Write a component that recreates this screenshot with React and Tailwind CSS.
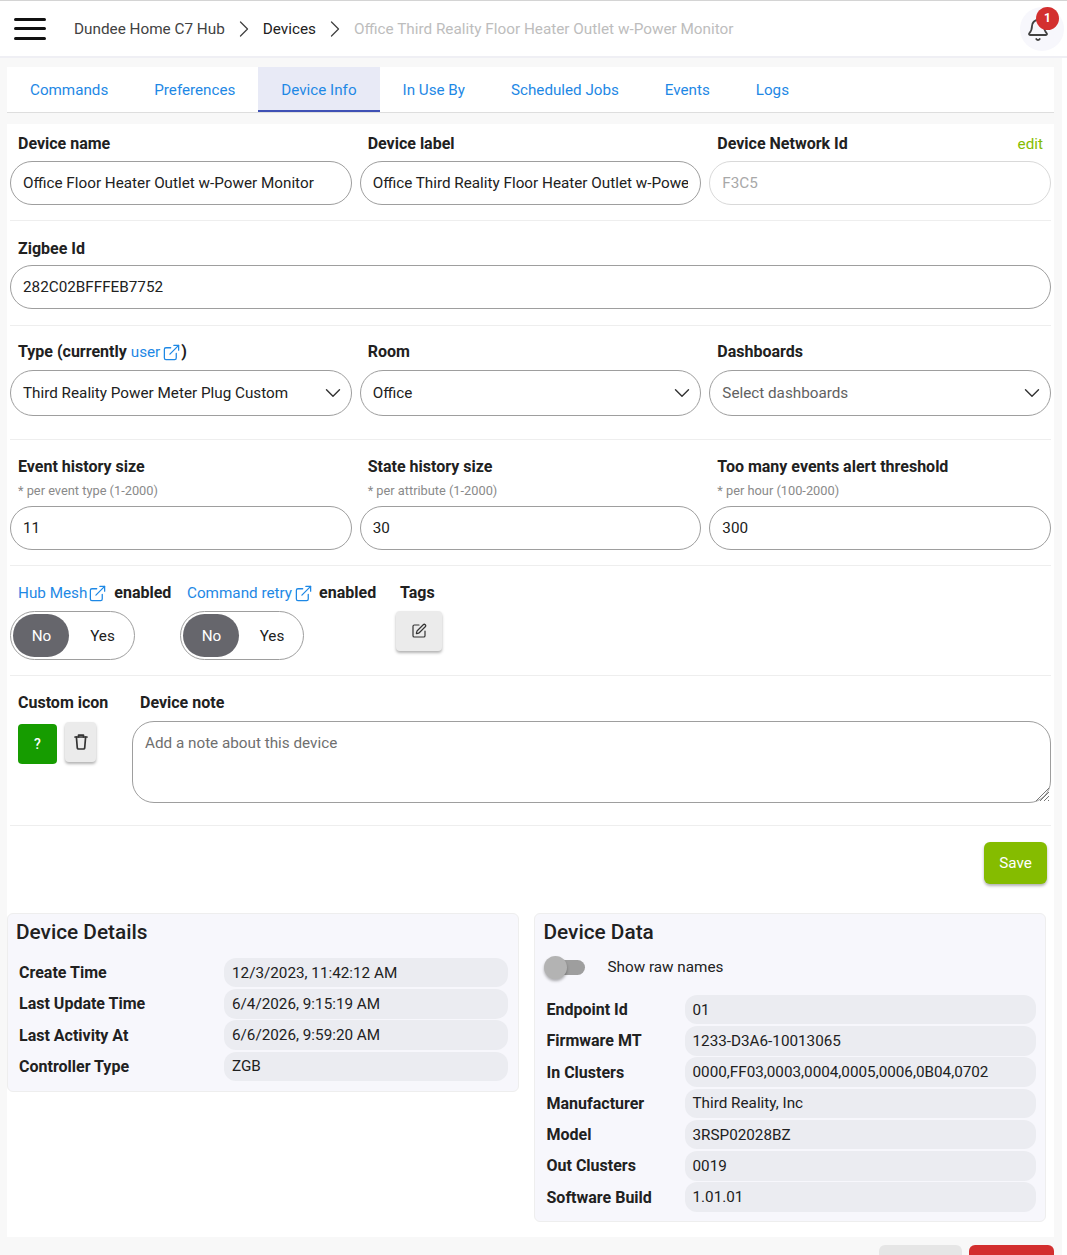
import React from 'react';
import { Bell, ChevronRight, ChevronDown, ExternalLink, SquarePen } from 'lucide-react';

const tabs = ['Commands', 'Preferences', 'Device Info', 'In Use By', 'Scheduled Jobs', 'Events', 'Logs'];

const details = [
    ['Create Time', '12/3/2023, 11:42:12 AM'],
    ['Last Update Time', '6/4/2026, 9:15:19 AM'],
    ['Last Activity At', '6/6/2026, 9:59:20 AM'],
    ['Controller Type', 'ZGB'],
];

const deviceData = [
    ['Endpoint Id', '01'],
    ['Firmware MT', '1233-D3A6-10013065'],
    ['In Clusters', '0000,FF03,0003,0004,0005,0006,0B04,0702'],
    ['Manufacturer', 'Third Reality, Inc'],
    ['Model', '3RSP02028BZ'],
    ['Out Clusters', '0019'],
    ['Software Build', '1.01.01'],
];

const Label = ({ children, className = '' }) => (
    <div className={`text-[16px] leading-[22px] font-bold text-[#212121] ${className}`}>{children}</div>
);

const TextInput = ({ value, muted }) => (
    <div className={`h-[44px] rounded-[22px] border px-3 pt-[1px] flex items-center text-[15.25px] ${muted ? 'border-[#d9d9d9] text-[#a8a8a8]' : 'border-[#9e9e9e] text-[#212121]'}`}>
        <div className="w-full overflow-hidden whitespace-nowrap">{value}</div>
    </div>
);

const Select = ({ value, muted }) => (
    <div className={`h-[46px] rounded-[23px] border border-[#9e9e9e] pl-3 pr-[5px] flex items-center justify-between text-[15.25px] ${muted ? 'text-[#616161]' : 'text-[#212121]'}`}>
        <span className="pt-[1px]">{value}</span>
        <ChevronDown size={26} strokeWidth={1.3} className="text-[#333333]" />
    </div>
);

const Divider = () => <div className="h-px bg-[#eeeeee]" />;

const Toggle = ({ className }) => (
    <div className={`h-[49px] rounded-[24.5px] border border-[#9e9e9e] p-[2px] flex items-center text-[15.25px] ${className}`}>
        <div className="w-[56px] h-[43px] rounded-[21.5px] bg-[#66666c] text-white flex items-center justify-center pl-[1px] pt-[1px]">No</div>
        <div className="flex-1 pl-[4px] pt-[1px] text-center text-[#212121]">Yes</div>
    </div>
);

const InfoRow = ({ name, value, nameWidth }) => (
    <div className="flex items-center h-[31.25px]">
        <div className="shrink-0 pt-[1px] text-[16px] font-bold text-[#212121]" style={{ width: nameWidth }}>{name}</div>
        <div className="flex-1 h-[29.5px] rounded-[12px] bg-[#ebecf1] px-2 pt-[1px] flex items-center text-[15.25px] text-[#212121] whitespace-nowrap">{value}</div>
    </div>
);

const LinkIcon = ({ className }) => (
    <ExternalLink size={19} strokeWidth={1.6} className={`text-[#1e88e5] ${className}`} />
);

const App = () => {
    return (
        <div className="h-[1255px] overflow-hidden bg-white text-[#212121]" style={{ fontFamily: 'Roboto, sans-serif' }}>
            <header className="h-[58px] bg-white border-t border-[#d4d4d4] border-b-[2px] border-b-[#efeff4] flex items-center pl-[14px] pr-[3px] text-[15.3px]">
                <div className="w-[32px] flex flex-col gap-[6.5px] mr-[28px]">
                    <div className="h-[3px] bg-[#111111] rounded-sm" />
                    <div className="h-[3px] bg-[#111111] rounded-sm" />
                    <div className="h-[3px] bg-[#111111] rounded-sm" />
                </div>
                <span className="text-[#424242] mt-[2px]">Dundee Home C7 Hub</span>
                <ChevronRight size={28} strokeWidth={1.1} className="mx-[5px] text-[#424242]" />
                <span className="text-[#212121] mt-[2px]">Devices</span>
                <ChevronRight size={28} strokeWidth={1.1} className="mx-[5px] text-[#424242]" />
                <span className="text-[#bdbdbd] mt-[2px]">Office Third Reality Floor Heater Outlet w-Power Monitor</span>
                <div className="relative ml-auto w-[44px] h-[44px] rounded-full bg-[#f7f7fc] flex items-center justify-center">
                    <Bell size={24} strokeWidth={1.8} className="text-[#424242] mt-[3px] mr-[8px]" />
                    <div className="absolute top-[0px] right-[5px] w-[23px] h-[23px] rounded-full bg-[#d32f2f] text-white text-[12px] font-bold flex items-center justify-center">1</div>
                </div>
            </header>

            <div className="flex h-[1197px]">
                <div className="w-[1062px] bg-[#f8f8f8] pl-[7px] pr-[8px] pt-[9px]">
                    <nav className="h-[46px] bg-white border-b border-[#dedede] flex text-[15.2px] text-[#1e88e5]">
                        {tabs.map(tab => (
                            <div key={tab} className={`px-[23px] pt-[4px] flex items-center border-b-[2px] ${tab === 'Device Info' ? 'bg-[#e8eaf6] border-[#3f51b5]' : 'border-transparent'}`}>{tab}</div>
                        ))}
                    </nav>

                    <main className="mt-[11px] bg-white h-[1113px] px-[3px]">
                        <section className="grid grid-cols-3 gap-x-2 pt-[9px] pb-[15px]">
                            <div>
                                <Label className="pl-2 mb-[6px]">Device name</Label>
                                <TextInput value="Office Floor Heater Outlet w-Power Monitor" />
                            </div>
                            <div>
                                <Label className="pl-2 mb-[6px]">Device label</Label>
                                <TextInput value="Office Third Reality Floor Heater Outlet w-Power Monitor" />
                            </div>
                            <div>
                                <div className="flex justify-between pl-2 pr-2 mb-[6px]">
                                    <Label>Device Network Id</Label>
                                    <span className="text-[15.25px] leading-[22px] text-[#85bc00]">edit</span>
                                </div>
                                <TextInput value="F3C5" muted />
                            </div>
                        </section>
                        <Divider />

                        <section className="pt-[17px] pb-[16px]">
                            <Label className="pl-2 mb-[5px]">Zigbee Id</Label>
                            <TextInput value="282C02BFFFEB7752" />
                        </section>
                        <Divider />

                        <section className="grid grid-cols-3 gap-x-2 pt-[15px] pb-[23px]">
                            <div>
                                <Label className="pl-2 mb-[7px] flex items-center">
                                    Type (currently<span className="font-normal text-[15.25px] text-[#1e88e5] ml-1">user</span>
                                    <LinkIcon className="ml-[2px]" />)
                                </Label>
                                <Select value="Third Reality Power Meter Plug Custom" />
                            </div>
                            <div>
                                <Label className="pl-2 mb-[7px]">Room</Label>
                                <Select value="Office" />
                            </div>
                            <div>
                                <Label className="pl-2 mb-[7px]">Dashboards</Label>
                                <Select value="Select dashboards" muted />
                            </div>
                        </section>
                        <Divider />

                        <section className="grid grid-cols-3 gap-x-2 pt-[16px] pb-[15px]">
                            {[
                                ['Event history size', '* per event type (1-2000)', '11'],
                                ['State history size', '* per attribute (1-2000)', '30'],
                                ['Too many events alert threshold', '* per hour (100-2000)', '300'],
                            ].map(([label, hint, value]) => (
                                <div key={label}>
                                    <Label className="pl-2">{label}</Label>
                                    <div className="pl-2 text-[12.8px] leading-[16px] mt-[5px] mb-[7px] text-[#8a8a8a]">{hint}</div>
                                    <TextInput value={value} />
                                </div>
                            ))}
                        </section>
                        <Divider />

                        <section className="flex pt-[16px] pb-[15px]">
                            <div className="w-[170px]">
                                <div className="pl-2 flex items-center h-[22px] text-[15.25px] mb-[7px] whitespace-nowrap">
                                    <span className="text-[#1e88e5]">Hub Mesh</span>
                                    <LinkIcon className="ml-[1px] mr-[7px]" />
                                    <span className="font-bold text-[16px]">enabled</span>
                                </div>
                                <Toggle className="w-[125px]" />
                            </div>
                            <div className="w-[220px]">
                                <div className="pl-[7px] flex items-center h-[22px] text-[15.25px] mb-[7px] whitespace-nowrap">
                                    <span className="text-[#1e88e5]">Command retry</span>
                                    <LinkIcon className="ml-[2px] mr-[6px]" />
                                    <span className="font-bold text-[16px]">enabled</span>
                                </div>
                                <Toggle className="w-[124px]" />
                            </div>
                            <div>
                                <Label className="mb-[7px]">Tags</Label>
                                <div className="w-[46px] h-[40px] -ml-[4px] rounded bg-[#ebebeb] shadow-[0_2px_3px_rgba(0,0,0,0.3)] flex items-center justify-center">
                                    <SquarePen size={16} strokeWidth={1.8} className="text-[#333333]" />
                                </div>
                            </div>
                        </section>
                        <Divider />

                        <section className="flex pt-[16px] pb-[22px]">
                            <div className="w-[122px] shrink-0">
                                <Label className="pl-2 mb-[10px]">Custom icon</Label>
                                <div className="flex pl-2 gap-2">
                                    <div className="w-[39px] h-[40px] rounded bg-[#169c00] text-white text-[14px] font-medium flex items-center justify-center">?</div>
                                    <div className="w-[31px] h-[40px] -mt-[2px] rounded bg-[#ebebeb] shadow-[0_2px_3px_rgba(0,0,0,0.3)] flex items-center justify-center">
                                        <svg width="16" height="18" viewBox="0 0 16 18" fill="none" stroke="#333333" strokeWidth="1.7" strokeLinecap="round" strokeLinejoin="round">
                                            <path d="M2 4h12" />
                                            <path d="M5.5 4V2.2h5V4" />
                                            <path d="M3.4 4l.9 11a1.2 1.2 0 0 0 1.2 1h5a1.2 1.2 0 0 0 1.2-1l.9-11" />
                                        </svg>
                                    </div>
                                </div>
                            </div>
                            <div className="flex-1">
                                <Label className="pl-2 mb-[7px]">Device note</Label>
                                <div className="relative h-[82px] rounded-[22px] border border-[#9e9e9e] px-3 pt-[10px] text-[15.25px] text-[#6f6f6f]">
                                    Add a note about this device
                                    <svg className="absolute right-0 bottom-0" width="16" height="16" viewBox="0 0 16 16" stroke="#777777" strokeWidth="1">
                                        <path d="M15 2L2 15M15 6L6 15M15 10L10 15M15 14L14 15" />
                                    </svg>
                                </div>
                            </div>
                        </section>
                        <Divider />

                        <div className="flex justify-end pt-[16px] pr-[4px]">
                            <div className="w-[63px] h-[42px] rounded-md bg-[#85bc00] text-white text-[15.25px] flex items-center justify-center shadow-[0_2px_3px_rgba(0,0,0,0.3)]">Save</div>
                        </div>

                        <div className="flex items-start gap-[15px] mt-[29px] -mx-[3px] pr-[8px]">
                            <section className="w-[512px] bg-[#f7f7fc] border border-[#eeeeee] rounded-md px-[8px] pt-[4px] pb-[9px]">
                                <h2 className="text-[20.8px] leading-[28px] font-medium text-[#212121] mb-[11px]">Device Details</h2>
                                <div className="pl-[3px] pr-[2px]">
                                    {details.map(([name, value]) => (
                                        <InfoRow key={name} name={name} value={value} nameWidth={205} />
                                    ))}
                                </div>
                            </section>

                            <section className="w-[513px] bg-[#f7f7fc] border border-[#eeeeee] rounded-md pl-[9px] pr-[8px] pt-[4px] pb-[8px]">
                                <h2 className="text-[20.8px] leading-[28px] font-medium text-[#212121]">Device Data</h2>
                                <div className="flex items-center h-[30px] mt-[6px] mb-[12px]">
                                    <div className="relative ml-[1px] w-[40px] h-[15px] rounded-full bg-[#9e9e9e]">
                                        <div className="absolute -left-[1px] -top-[4px] w-[23px] h-[23px] rounded-full bg-[#b3b3b3] shadow-[0_2px_3px_rgba(0,0,0,0.3)]" />
                                    </div>
                                    <span className="ml-[23px] text-[15.25px]">Show raw names</span>
                                </div>
                                <div className="pl-[3px] pr-[1px]">
                                    {deviceData.map(([name, value]) => (
                                        <InfoRow key={name} name={name} value={value} nameWidth={138} />
                                    ))}
                                </div>
                            </section>
                        </div>
                    </main>

                    <div className="flex justify-end gap-[7px] mt-[8px]">
                        <div className="w-[83px] h-[40px] rounded-md bg-[#e6e6e6]" />
                        <div className="w-[85px] h-[40px] rounded-md bg-[#d32f2f]" />
                    </div>
                </div>
                <div className="flex-1 bg-white" />
            </div>
        </div>
    );
};

export default App;
